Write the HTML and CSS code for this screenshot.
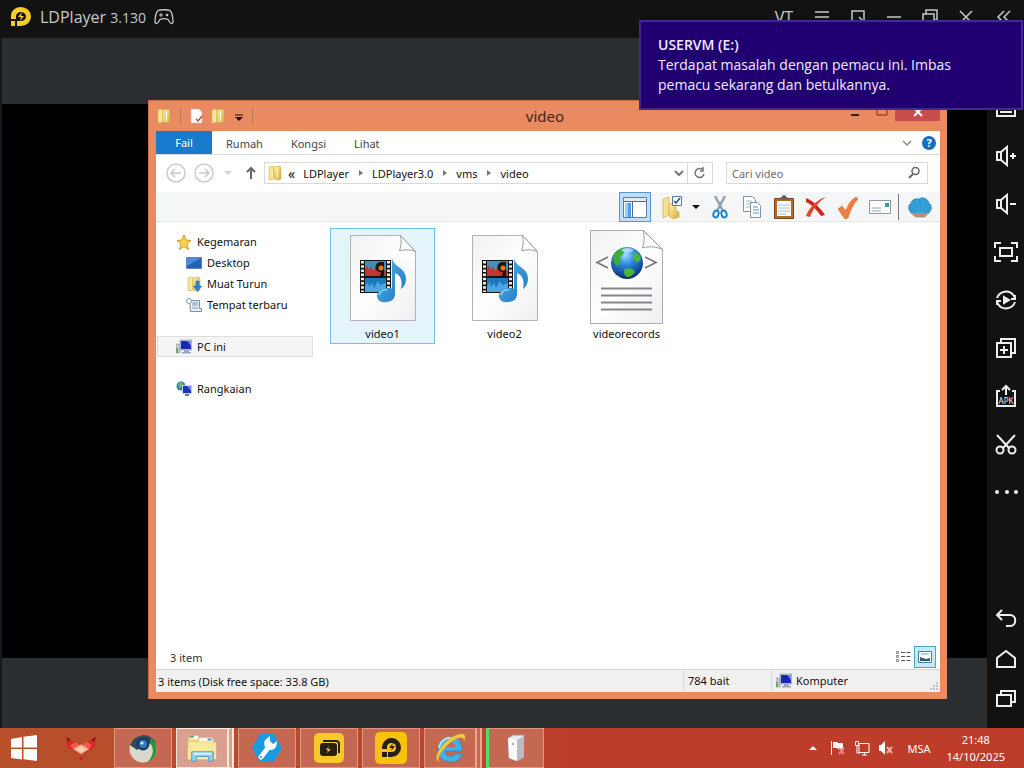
FILE: index.html
```html
<!DOCTYPE html>
<html lang="ms">
<head>
  <meta charset="UTF-8" />
  <meta name="viewport" content="width=device-width, initial-scale=1.0" />
  <title>video</title>
  <link rel="stylesheet" href="styles.css">
</head>
<body>
  <!-- shared icons -->
  <svg class="sprite" aria-hidden="true">
    <defs>
      <linearGradient id="gold" x1="0" x2="1" y1="0" y2="1">
        <stop offset="0" stop-color="#fdf3b0"/><stop offset="1" stop-color="#d9ae3c"/>
      </linearGradient>
      <linearGradient id="paper" x1="0" x2="1" y1="0" y2="1">
        <stop offset="0" stop-color="#f1f1f2"/><stop offset="0.5" stop-color="#fff"/><stop offset="1" stop-color="#eeeef0"/>
      </linearGradient>
      <linearGradient id="note" x1="0" x2="1" y1="0" y2="1">
        <stop offset="0" stop-color="#5fb2e8"/><stop offset="1" stop-color="#1578c4"/>
      </linearGradient>
      <radialGradient id="ball" cx="0.45" cy="0.25" r="0.8">
        <stop offset="0" stop-color="#9fdcff"/><stop offset="0.4" stop-color="#2b84dd"/><stop offset="1" stop-color="#06246f"/>
      </radialGradient>
    </defs>
    <symbol id="folder" viewBox="0 0 16 16">
      <path d="M2 2l4-1 1 1v12l-5 1z" fill="#f6e79a" stroke="#d5b650" stroke-width=".6"/>
      <path d="M7 2l6-1 1 3v10l-3 1-4-1z" fill="url(#gold)" stroke="#cfa83f" stroke-width=".6"/>
      <path d="M10 4h1v9h-1z" fill="#fffbe0"/>
    </symbol>
    <symbol id="computer" viewBox="0 0 16 16">
      <path d="M0 5h4v9H0z" fill="#c6cbd2" stroke="#8c95a0" stroke-width=".6"/>
      <path d="M0 9h2v5H0z" fill="#75a75c"/>
      <path d="M4 1h12v10H4z" fill="#c9d2ea" stroke="#7a87a8" stroke-width=".6"/>
      <path d="M5 2h10v8H5z" fill="#1628b4"/>
      <path d="M11 2h4v5z" fill="#7186ee"/>
      <path d="M8 11h5v2h2v1.500H6V13h2z" fill="#9aa5bb"/>
    </symbol>
    <symbol id="media-file" viewBox="0 0 68 88">
      <path d="M1.500 1.500h50l15 16v69h-65z" fill="url(#paper)" stroke="#b2b2b5"/>
      <path d="M51.500 1.500c1 6 1 10-1 15 6-1 11-1 16 1z" fill="#fff" stroke="#9c9c9f"/>
      <path d="M11 26h31v33H11z" fill="#141414"/>
      <path d="M13.500 27v31M39.500 27v31" stroke="#f3ead7" stroke-width="3" stroke-dasharray="2.500 1.700"/>
      <path d="M16 27h21v15H16z" fill="#3f8fc0"/>
      <path d="M16 42v-7l2-4 2 5 2-4 2 5 3-5 2 4 3-2 5 3v5z" fill="#c3352d"/>
      <path d="M31 28a4 4 0 1 0 1 10l-1 4h4V28z" fill="#20150e"/>
      <circle cx="32" cy="34" r="2.500" fill="#e07c1e"/>
      <path d="M16 44h21v14H16z" fill="#1f78bd"/>
      <path d="M16 52l3-4 1 5 3-4 2 5 4-7 2 4 6-2v9H16z" fill="#4aa5e0"/>
      <path d="M43 24c2 10 14 9 14 21 0 4-2 8-5 10 2-9-1-14-6-16v21c0 5-4 8-9 8-5 1-9-2-9-6s4-8 10-8c3 0 5 0 5 1z" fill="url(#note)"/>
      <path d="M30 61c1-4 5-6 8-5" fill="none" stroke="#8fcff5" stroke-width="1.500"/>
    </symbol>
    <symbol id="xml-file" viewBox="0 0 76 96">
      <path d="M1.500 1.500h53l19 19v74h-72z" fill="url(#paper)" stroke="#adadb0"/>
      <path d="M54.500 1.500c1 7 1 12-1 17 8-1 14-1 20 2z" fill="#fff" stroke="#9c9c9f"/>
      <path d="M19 28L8 33.500 19 39M56 28l11 5.500L56 39" fill="none" stroke="#77777f" stroke-width="1.700"/>
      <circle cx="38" cy="34" r="16" fill="url(#ball)"/>
      <path d="M25 25c4-4 7-6 10-6 1 4-1 7-4 9 2 4-1 7-3 9-3-2-5-7-3-12z" fill="#3cae35"/>
      <path d="M46 23c3 1 5 3 6 7l-4 4-4-5zM36 40c5-2 9 0 10 3-2 3-5 5-8 5-3-2-4-5-2-8z" fill="#49b53a"/>
      <path d="M32 21c5-3 10-2 13 0-4 3-9 4-13 0z" fill="#d7f5ff" opacity=".6"/>
      <path d="M12 59.500h51M12 66.500h51M12 73.500h51M12 80.500h51" stroke="#85858f" stroke-width="2"/>
    </symbol>
  </svg>

  <main class="player">
    <header class="player-header">
      <svg class="ld-logo" viewBox="0 0 22 22">
        <path d="M1 9A10 8.500 0 0 1 11 1a10 9.500 0 0 1 0 19H7v-5h4a5 4.500 0 1 0-5-5v3H1z" fill="#f6cd22"/>
        <path d="M1 15h4v5H1z" fill="#f6cd22"/>
        <path d="M12 6l-4 5h3l-1 4 4-5h-3z" fill="#f6cd22"/>
      </svg>
      <span class="player-name">LDPlayer <small>3.130</small></span>
      <svg class="gamepad" viewBox="0 0 22 18">
        <path d="M5 2.500c2-1 10-1 12 0 2 2 3 8 3 12-1 2-3 1-5-3-2-1-6-1-8 0-2 4-4 5-5 3 0-4 1-10 3-12z" fill="none" stroke="#c8c8c8" stroke-width="1.300"/>
        <path d="M8 5v4M6 7h4" stroke="#c8c8c8"/><circle cx="14" cy="7" r="1.300" fill="#c8c8c8"/>
      </svg>
      <div class="player-controls">
        <button>VT</button>
        <button aria-label="Menu"><svg viewBox="0 0 16 16"><path d="M1 3h14M1 8h14M1 13h14"/></svg></button>
        <button aria-label="Pin"><svg viewBox="0 0 16 16"><path d="M8 13H2V2h12v11l-5-5"/></svg></button>
        <button aria-label="Minimize"><svg viewBox="0 0 16 16"><path d="M1 8h14"/></svg></button>
        <button aria-label="Maximize"><svg viewBox="0 0 16 16"><path d="M1 5h11v9H1zM4 5V1h11v10h-3"/></svg></button>
        <button aria-label="Close"><svg viewBox="0 0 16 16"><path d="M2 2l12 12M14 2L2 14"/></svg></button>
        <button aria-label="Collapse"><svg viewBox="0 0 16 16"><path d="M8 2L2 8l6 6M14 2L8 8l6 6"/></svg></button>
      </div>
    </header>

    <div class="player-body">
      <div class="stage"><div class="screen"></div></div>
      <nav class="player-tools">
        <button aria-label="Keyboard"><svg viewBox="0 0 24 24"><path d="M3 5h18v15H3z"/><path d="M6 16h12"/></svg></button>
        <button aria-label="Volume up"><svg viewBox="0 0 24 24"><path d="M3 8h4l6-5v18l-6-5H3zM7 8v8"/><path d="M16 12h6M19 9v6"/></svg></button>
        <button aria-label="Volume down"><svg viewBox="0 0 24 24"><path d="M3 8h4l6-5v18l-6-5H3zM7 8v8"/><path d="M16 12h6"/></svg></button>
        <button aria-label="Full screen"><svg viewBox="0 0 24 24"><path d="M1 8V3h6M17 3h6v5M23 16v5h-6M7 21H1v-5M6 8h12v8H6z"/></svg></button>
        <button aria-label="Sync"><svg viewBox="0 0 24 24"><path d="M3 10a9.500 9.500 0 0 1 17-2l1 3M21 14a9.500 9.500 0 0 1-17 2l-1-3M3 17v-4h4M21 7v4h-4"/><path d="M10 9l5 3-5 3z" class="solid"/></svg></button>
        <button aria-label="New window"><svg viewBox="0 0 24 24"><path d="M3 7h14v14H3zM7 7V3h14v14h-4M10 10v8M6 14h8"/></svg></button>
        <button aria-label="Install APK"><svg viewBox="0 0 24 24"><path d="M6 7H3v15h18V7h-3M12 11V2M8 6l4-4 4 4"/><text x="12" y="20">APK</text></svg></button>
        <button aria-label="Cut"><svg viewBox="0 0 24 24"><path d="M3 3l12 13M21 3L9 16"/><circle cx="6" cy="18" r="3.500"/><circle cx="18" cy="18" r="3.500"/></svg></button>
        <button aria-label="More"><svg viewBox="0 0 24 24"><g class="solid"><circle cx="3" cy="12" r="1"/><circle cx="13" cy="12" r="1"/><circle cx="22" cy="12" r="1"/></g></svg></button>
        <div class="android-keys">
          <button aria-label="Back"><svg viewBox="0 0 24 24"><path d="M8 3L3 8l5 5M3 8h13c7 0 7 11 0 11h-4"/></svg></button>
          <button aria-label="Home"><svg viewBox="0 0 24 24"><path d="M3 20v-9l9-7 9 7v9z"/></svg></button>
          <button aria-label="Recent"><svg viewBox="0 0 24 24"><path d="M3 8h14v11H3zM7 8V4h14v11h-4"/></svg></button>
        </div>
      </nav>
    </div>
  </main>

  <section class="explorer">
    <div class="title-bar">
      <div class="quick-access">
        <svg viewBox="0 0 16 16"><use href="#folder"/></svg>
        <i></i>
        <button aria-label="Properties"><svg viewBox="0 0 16 16"><path d="M2 1h8l3 3v11H2z" fill="#fff" stroke="#c7b5ac" stroke-width=".7"/><path d="M7 11l2 2 4-5" fill="none" stroke="#c74b33" stroke-width="1.500"/></svg></button>
        <button aria-label="New folder"><svg viewBox="0 0 16 16"><use href="#folder"/></svg></button>
        <button aria-label="Customize"><svg viewBox="0 0 16 16"><path d="M4 7h8" stroke="#111"/><path d="M4 9h8l-4 4z" fill="#111"/></svg></button>
        <i></i>
      </div>
      <h1>video</h1>
      <div class="window-controls">
        <button aria-label="Minimize"><svg viewBox="0 0 12 12"><path d="M2 10h8" stroke="#3b1c10" stroke-width="2"/></svg></button>
        <button aria-label="Maximize"><svg viewBox="0 0 12 12"><path d="M1 1h10v9H1z" fill="none" stroke="#7a2b12"/></svg></button>
        <button class="close" aria-label="Close"><svg viewBox="0 0 12 12"><path d="M2 3l8 8M10 3l-8 8" stroke="#fff" stroke-width="2"/></svg></button>
      </div>
    </div>

    <div class="window-content">
      <div class="tabs">
        <button class="file-tab">Fail</button>
        <button>Rumah</button>
        <button>Kongsi</button>
        <button>Lihat</button>
        <div class="tabs-end">
          <svg viewBox="0 0 14 14"><path d="M3 5l4 4 4-4" fill="none" stroke="#888" stroke-width="1.500"/></svg>
          <button class="help">?</button>
        </div>
      </div>

      <div class="address-row">
        <button class="round" aria-label="Back"><svg viewBox="0 0 20 20"><circle cx="10" cy="10" r="9"/><path d="M15 10H5M9 6l-4 4 4 4"/></svg></button>
        <button class="round" aria-label="Forward"><svg viewBox="0 0 20 20"><circle cx="10" cy="10" r="9"/><path d="M5 10h10M11 6l4 4-4 4"/></svg></button>
        <button class="history" aria-label="Recent locations"><svg viewBox="0 0 8 8"><path d="M0 2h8L4 6z" fill="#d0d0d0"/></svg></button>
        <button class="up" aria-label="Up"><svg viewBox="0 0 14 14"><path d="M7 13V2M3 6l4-4 4 4" fill="none" stroke="#666" stroke-width="2"/></svg></button>
        <div class="address">
          <svg class="small-icon" viewBox="0 0 16 16"><use href="#folder"/></svg>
          <span class="dots">«</span>
          <button>LDPlayer</button><span class="arrow"></span>
          <button>LDPlayer3.0</button><span class="arrow"></span>
          <button>vms</button><span class="arrow"></span>
          <button>video</button>
          <button class="drop" aria-label="Previous locations"><svg viewBox="0 0 12 12"><path d="M2 4l4 4 4-4" fill="none" stroke="#777" stroke-width="2"/></svg></button>
          <button class="refresh" aria-label="Refresh"><svg viewBox="0 0 14 14"><path d="M10 4a4.500 4.500 0 1 0 1 4M10 1v4H7" fill="none" stroke="#777" stroke-width="1.500"/></svg></button>
        </div>
        <div class="search">
          <input type="text" placeholder="Cari video" aria-label="Cari video">
          <svg viewBox="0 0 14 14"><circle cx="8.500" cy="5" r="3.500" fill="none" stroke="#666" stroke-width="1.500"/><path d="M6 8l-4 4" stroke="#666" stroke-width="2"/></svg>
        </div>
      </div>

      <div class="commands">
        <button class="active" aria-label="Navigation pane"><svg viewBox="0 0 24 24"><path d="M.500 2.500h23v20H.500z" fill="#fff" stroke="#5d7ea5"/><path d="M1 3h22v3H1z" fill="#dfeaf6"/><path d="M2 8h6v14H2z" fill="#4b9de6"/><path d="M2 8h3v14H2z" fill="#9dccf5"/><path d="M1 6.500h22M9.500 7v15" stroke="#4b6a92"/></svg></button>
        <button class="organize" aria-label="Organize"><svg viewBox="0 0 24 24"><path d="M3 4l6-2v18l-6 3z" fill="#f5e28e" stroke="#cfae4a" stroke-width=".7"/><path d="M9 9l7-1v8l3 1v5l-6 2-4-3z" fill="url(#gold)" stroke="#cfa83f" stroke-width=".7"/><path d="M12.500 1.500h9v9h-9z" fill="#f4f9ff" stroke="#5d7b9f"/><path d="M14 6l2 2 4-5" fill="none" stroke="#234c83" stroke-width="1.500"/></svg></button>
        <button class="organize-drop" aria-label="Organize options"><svg viewBox="0 0 8 8"><path d="M0 2h8L4 6z" fill="#111"/></svg></button>
        <button aria-label="Cut"><svg viewBox="0 0 24 24"><path d="M7 1l8 15M17 1L9 16" stroke="#8ba2b5" stroke-width="2.500"/><ellipse cx="8" cy="19" rx="2.500" ry="3.500" transform="rotate(20 8 19)" fill="none" stroke="#1e83ce" stroke-width="2"/><ellipse cx="16" cy="19" rx="2.500" ry="3.500" transform="rotate(-20 16 19)" fill="none" stroke="#1e83ce" stroke-width="2"/></svg></button>
        <button aria-label="Copy"><svg viewBox="0 0 24 24"><path d="M3.500 1.500h9l3 3v12h-12z" fill="#fff" stroke="#8492a3"/><path d="M6 6h6M6 9h6M6 12h4" stroke="#9fb4cb"/><path d="M10.500 7.500h7l3 3v12h-10z" fill="#fff" stroke="#8492a3"/><path d="M13 12h5M13 15h6M13 18h6" stroke="#4e9bd9"/></svg></button>
        <button aria-label="Paste"><svg viewBox="0 0 24 24"><path d="M2.500 3.500h19v20h-19z" fill="#b06a2a" stroke="#7b4418"/><path d="M5 6h14v15H5z" fill="#fbfbf6"/><path d="M6 10h12M6 13h12M6 16h12M6 19h8" stroke="#a9c0da"/><path d="M7 5l2-3h1a2 2 0 0 1 4 0h1l2 3z" fill="#5f6368"/></svg></button>
        <button aria-label="Delete"><svg viewBox="0 0 24 24"><path d="M2 3c7 3 14 9 19 17l-4 1C12 14 7 9 2 7z" fill="#cf2419"/><path d="M22 2C14 7 9 14 6 22l-4-1C5 13 12 5 22 2z" fill="#e5442f"/></svg></button>
        <button aria-label="Select"><svg viewBox="0 0 24 24"><path d="M2 14l4-3 4 5C12 9 16 4 20 2l2 2c-5 5-8 12-10 19l-3 1z" fill="#ee7d3e" stroke="#d26127" stroke-width=".5"/></svg></button>
        <button aria-label="Email"><svg viewBox="0 0 24 24"><path d="M1.500 5.500h21v13h-21z" fill="#fff" stroke="#8d9aa8"/><path d="M4 13h9M4 16h9" stroke="#8da3b8"/><path d="M17 8h4v4h-4z" fill="#3d9992"/></svg></button>
        <span class="divider"></span>
        <button aria-label="Shell"><svg viewBox="0 0 24 24"><path d="M6 20C0 17-1 11 3 8c1-4 5-5 8-4 4-3 9 0 10 4 4 3 3 9-3 12l-1 2H8z" fill="#2d9bd5" stroke="#4c91a3" stroke-width=".7"/><path d="M12 20L4 9M12 20L9 5M12 20l4-15M12 20l9-10" stroke="#58b5df" stroke-width=".6"/><path d="M2 17l5 1h10l4-1-4 5H7z" fill="#b58f70"/></svg></button>
      </div>

      <div class="panes">
        <nav class="tree">
          <a href="#"><svg viewBox="0 0 16 16"><path d="M8 1l2 5 5 .5-4 3.500 1.500 5.500L8 12.500 3.500 15.500 5 10 1 6.500 6 6z" fill="#ffd250" stroke="#dc9528"/></svg>Kegemaran</a>
          <a class="sub" href="#"><svg viewBox="0 0 16 16"><path d="M.500 2.500h15v11H.500z" fill="#2461b8" stroke="#5f83b5"/><path d="M1 3h14L1 11z" fill="#4f8ad8"/></svg>Desktop</a>
          <a class="sub" href="#"><svg viewBox="0 0 16 16"><use href="#folder"/><path d="M10 5h3v5h2.500l-4 5.500L7.500 10H10z" fill="#2f86d6" stroke="#1b5f9f" stroke-width=".6"/></svg>Muat Turun</a>
          <a class="sub" href="#"><svg viewBox="0 0 16 16"><path d="M3.500 3.500h10v8h2v3h-11z" fill="#e8eef5" stroke="#7d8ea1"/><path d="M6 6h6M6 8h6M6 11h6" stroke="#8096ad"/><circle cx="3" cy="4" r="2.500" fill="#fff" stroke="#8899a9"/></svg>Tempat terbaru</a>
          <a class="group selected" href="#"><svg viewBox="0 0 16 16"><use href="#computer"/></svg>PC ini</a>
          <a class="group" href="#"><svg viewBox="0 0 16 16"><circle cx="5" cy="5" r="4.500" fill="#2b83a8"/><path d="M2 3l3-2 2 2-3 5z" fill="#6bc06e"/><path d="M6 4h10v9H6z" fill="#c9d2ea"/><path d="M7 5h8v7H7z" fill="#1b35bd"/><path d="M11 5h4v5z" fill="#6c87ee"/><path d="M9 13h4v2H9z" fill="#6f7d91"/></svg>Rangkaian</a>
        </nav>
        <div class="files">
          <button class="file selected"><svg class="media" viewBox="0 0 68 88"><use href="#media-file"/></svg><span>video1</span></button>
          <button class="file"><svg class="media" viewBox="0 0 68 88"><use href="#media-file"/></svg><span>video2</span></button>
          <button class="file"><svg class="xml" viewBox="0 0 76 96"><use href="#xml-file"/></svg><span>videorecords</span></button>
        </div>
      </div>

      <div class="details">
        <span>3 item</span>
        <div class="views">
          <button aria-label="Details view"><svg viewBox="0 0 16 14"><path d="M1.500 1.500h2v2h-2zM1.500 5.500h2v2h-2zM1.500 9.500h2v2h-2z" fill="none" stroke="#888"/><path d="M6 2.500h4M11.500 2.500h4M6 6.500h4M11.500 6.500h4M6 10.500h4M11.500 10.500h4" stroke="#555"/></svg></button>
          <button class="active" aria-label="Icon view"><svg viewBox="0 0 16 14"><path d="M1.500 1.500h13v11h-13z" fill="#fff" stroke="#48829e"/><path d="M3 7l3 1 3 1 4-1v3H3z" fill="#315d70"/><path d="M4 4h8" stroke="#6caac5"/></svg></button>
        </div>
      </div>

      <footer class="status-bar">
        <span class="status-main">3 items (Disk free space: 33.8 GB)</span>
        <span class="status-size">784 bait</span>
        <span class="status-place"><svg class="small-icon" viewBox="0 0 16 16"><use href="#computer"/></svg>Komputer</span>
        <svg class="grip" viewBox="0 0 12 12"><path d="M8 2h2v2H8zM8 5h2v2H8zM8 8h2v2H8zM5 5h2v2H5zM5 8h2v2H5zM2 8h2v2H2z" fill="#c0c0c0"/></svg>
      </footer>
    </div>
  </section>

  <aside class="toast">
    <strong>USERVM (E:)</strong>
    <p>Terdapat masalah dengan pemacu ini. Imbas pemacu sekarang dan betulkannya.</p>
  </aside>

  <footer class="taskbar">
    <button class="start" aria-label="Start"><svg viewBox="0 0 28 28"><path d="M1 5l11-2v10.500H1zM13.500 2.800L27 1v12.500H13.500zM1 15h11v10.500L1 24zM13.500 15H27v12l-13.500-1.800z" fill="#fff"/></svg></button>
    <button class="pinned" aria-label="Red app"><svg viewBox="0 0 34 28"><path d="M2 4l9 3 6 5 6-5 9-3v9l-15 9-15-9z" fill="#d8272a"/><path d="M1 2l5 3-3 3zM33 2l-5 3 3 3z" fill="#7c1a18"/><path d="M11 7l6 5 6-5 6 5-12 8-12-8z" fill="#ef5a48"/><path d="M17 10l9 5-9 6-9-6z" fill="#f7a184"/><path d="M17 12l6 3-6 4-6-4z" fill="#fbd0b5"/><path d="M14 24h6l-3 3z" fill="#c7201f"/></svg></button>
    <button class="task" aria-label="Browser"><svg viewBox="0 0 32 32"><circle cx="16" cy="17" r="13.500" fill="#d9d8cb"/><path d="M3 13A14 14 0 0 1 29 11l-12 1-7 6z" fill="#304956"/><path d="M24 6a14 14 0 0 1-3 24c5-7 7-12 2-19z" fill="#25973b"/><circle cx="16" cy="12" r="6.500" fill="#15396d"/><circle cx="16" cy="12" r="4" fill="#377dbc"/><circle cx="15" cy="11" r="1.500" fill="#d5edfa"/></svg></button>
    <button class="task stacked current" aria-label="File Explorer"><svg viewBox="0 0 34 32"><path d="M2 5h8l2 2h18v21H2z" fill="#ecd27a"/><path d="M5 3h8v4H5zM14 5h14v4H14z" fill="#fafbe9"/><path d="M5 4h3" stroke="#3f9c43" stroke-width="2"/><path d="M23 7h4" stroke="#4292cd" stroke-width="2"/><path d="M2 10h30v18H2z" fill="#f8e9a0"/><path d="M6 30V20h23v10h-5v-5H11v5z" fill="#8fd0ea" stroke="#4d9fc7"/><path d="M8 22h19" stroke="#e4f8ff" stroke-width="2"/></svg></button>
    <button class="task" aria-label="Repair tool"><svg viewBox="0 0 32 32"><path d="M9 2h14l8 14-8 14H9L1 16z" fill="#199be0"/><path d="M17 16l-7 9" stroke="#fff" stroke-width="5" stroke-linecap="round"/><path d="M14 8l5-4v5l3 3 4-3c0 7-3 9-7 9-5 0-7-6-5-10z" fill="#fff"/><circle cx="10" cy="25" r="1" fill="#199be0"/></svg></button>
    <button class="task" aria-label="LDMultiPlayer"><svg viewBox="0 0 32 32"><rect x="1" y="1" width="30" height="30" rx="5" fill="#f8c82d"/><path d="M10 9h13c2 0 3 1 3 3v9" fill="none" stroke="#27210f" stroke-width="2"/><rect x="7" y="11" width="17" height="13" rx="3" fill="#27210f"/><path d="M16 14l-3 4h2l-1 3 4-4h-3z" fill="#f8c82d"/></svg></button>
    <button class="task" aria-label="LDPlayer"><svg viewBox="0 0 32 32"><rect width="32" height="32" rx="5" fill="#f8c20f"/><path d="M7 17v-2a9.500 9.500 0 1 1 9.500 10H13v-5h3.500a4.500 4.500 0 1 0-4.500-5v2z" fill="#252014"/><path d="M7 20h5v5H7z" fill="#252014"/><path d="M18 11l-4 5h3l-1 3 4-5h-3z" fill="#252014"/></svg></button>
    <button class="task stacked" aria-label="Internet Explorer"><svg viewBox="0 0 32 32"><path d="M28 19H11c0 6 8 7 10 3h7c-2 6-6 8-11 8C9 30 4 25 4 18 4 10 10 5 17 5c7 0 12 6 11 14z" fill="#45b0e6" stroke="#207fb8" stroke-width=".6"/><path d="M11 15c1-6 10-6 11 0z" fill="#c56852"/><path d="M5 16C6 9 12 5 18 6" fill="none" stroke="#b5e8fb" stroke-width="2"/><path d="M5 30C-4 26 13 3 27 2c5-1 5 4 3 7 0-3-2-4-5-3C16 8 2 23 5 30z" fill="#f5c941" stroke="#d39a20" stroke-width=".5"/></svg></button>
    <button class="task progress" aria-label="Storage"><svg viewBox="0 0 32 32"><path d="M8 6l5-3h11l-1 23-6 3-8-3z" fill="#e9eaec" stroke="#999"/><path d="M8 6l9 2v21l-8-3z" fill="#fafafa"/><path d="M17 8l7-4v21l-7 4z" fill="#b9bdc3"/><circle cx="13" cy="12" r="1" fill="#898f97"/></svg></button>
    <div class="tray">
      <svg class="tray-up" viewBox="0 0 8 8"><path d="M0 6h8L4 2z" fill="#fff"/></svg>
      <svg viewBox="0 0 16 16"><path d="M1.500 1v14" stroke="#fff"/><path d="M3 2h4l1 1h5v6H8L7 8H3z" fill="#fff"/><path d="M9 8l5 6M14 8l-5 6" stroke="#f2808c" stroke-width="2"/></svg>
      <svg viewBox="0 0 16 16"><path d="M5 3.500h10v9H5zM8 15h5M10.500 12v3" fill="none" stroke="#fff"/><path d="M1.500 1.500h3v4h-3zM3 6v7h3" fill="none" stroke="#fff"/></svg>
      <svg viewBox="0 0 16 16"><path d="M1 5h2l4-4v14l-4-4H1z" fill="#fff"/><path d="M9 7l5 6M14 7l-5 6" stroke="#f4b0a8" stroke-width="2"/></svg>
      <span class="language">MSA</span>
      <time class="clock"><span>21:48</span><span>14/10/2025</span></time>
    </div>
  </footer>
</body>
</html>
```
FILE: styles.css
```css
:root {
  --frame: #e98a61;
  --blue: #1979ca;
  --dark: #121212;
  --slate: #2a2e31;
}
* {
  box-sizing: border-box;
}
body {
  margin: 0;
  height: 100vh;
  display: flex;
  flex-direction: column;
  position: relative;
  overflow: hidden;
  font-family: "Noto Sans", "Open Sans", sans-serif;
  font-size: 11px;
  color: #111;
  background: #000;
}
button {
  padding: 0;
  border: none;
  background: none;
  font: inherit;
  color: inherit;
  display: flex;
  align-items: center;
  justify-content: center;
}
svg {
  display: block;
  flex-shrink: 0;
}
.sprite {
  position: absolute;
  width: 0;
  height: 0;
}

/* LDPlayer */
.player {
  flex: 1;
  min-height: 0;
  display: flex;
  flex-direction: column;
}
.player-header {
  height: 38px;
  padding: 0 0 4px 10px;
  display: flex;
  align-items: center;
  background: var(--dark);
  color: #c8c8c8;
}
.ld-logo {
  width: 22px;
  height: 22px;
}
.player-name {
  margin: 0 7px 0 8px;
  font-family: "Open Sans", sans-serif;
  font-size: 16px;
}
.player-name small {
  font-size: 14px;
}
.gamepad {
  width: 22px;
  height: 18px;
}
.player-controls {
  margin-left: auto;
  display: flex;
}
.player-controls button {
  width: 36px;
  height: 32px;
  font-size: 16px;
}
.player-controls button:first-child,
.player-controls button:last-child {
  width: 40px;
}
.player-controls svg {
  width: 16px;
  height: 16px;
  fill: none;
  stroke: #c8c8c8;
  stroke-width: 1.5;
}
.player-body {
  flex: 1;
  min-height: 0;
  display: flex;
}
.stage {
  flex: 1;
  padding: 66px 0 70px;
  background: var(--slate);
  border-left: 2px solid #15191b;
  display: flex;
}
.screen {
  flex: 1;
  background: #000;
}
.player-tools {
  width: 37px;
  padding: 46px 0 9px;
  background: var(--dark);
  display: flex;
  flex-direction: column;
}
.player-tools button {
  width: 100%;
  height: 48px;
}
.player-tools svg {
  width: 24px;
  height: 24px;
  fill: none;
  stroke: #eee;
  stroke-width: 2;
}
.player-tools .solid {
  fill: #eee;
}
.player-tools text {
  font-size: 8px;
  text-anchor: middle;
  fill: #eee;
  stroke: none;
}
.android-keys {
  margin-top: auto;
}
.android-keys button {
  height: 40px;
}

/* Explorer window */
.explorer {
  position: absolute;
  top: 100px;
  right: 77px;
  bottom: 69px;
  left: 148px;
  padding: 0 7px 7px;
  border: 1px solid #c66f49;
  border-width: 1px 0 0 1px;
  background: var(--frame);
  display: flex;
  flex-direction: column;
}
.title-bar {
  height: 30px;
  padding-right: 6px;
  display: grid;
  grid-template-columns: 1fr auto 1fr;
  align-items: center;
}
.quick-access {
  display: flex;
  align-items: center;
  gap: 5px;
}
.quick-access svg {
  width: 16px;
  height: 16px;
}
.quick-access i {
  width: 1px;
  height: 16px;
  margin: 0 3px;
  background: #bd7555;
}
.quick-access i:last-child {
  margin: 0;
}
.title-bar h1 {
  margin: 0;
  font-size: 15px;
  font-weight: normal;
  color: #43271b;
}
.window-controls {
  align-self: start;
  justify-self: end;
  margin-right: -6px;
  display: flex;
}
.window-controls button {
  width: 27px;
  height: 20px;
}
.window-controls .close {
  width: 45px;
  background: #c84e4b;
}
.window-controls svg {
  width: 12px;
  height: 12px;
}
.window-content {
  flex: 1;
  min-height: 0;
  background: #fff;
  display: flex;
  flex-direction: column;
}
.tabs {
  height: 24px;
  display: flex;
  border-bottom: 1px solid #dadbdc;
  color: #444;
}
.tabs > button {
  padding: 2px 14px 0;
}
.tabs > .file-tab {
  width: 56px;
  padding: 0;
  background: var(--blue);
  color: #fff;
}
.tabs-end {
  margin-left: auto;
  padding-right: 4px;
  display: flex;
  align-items: center;
  gap: 8px;
}
.tabs-end svg {
  width: 14px;
  height: 14px;
}
.help {
  width: 14px;
  height: 14px;
  border-radius: 50%;
  background: #146fc2;
  color: #fff;
  font-weight: bold;
}
.address-row {
  height: 36px;
  margin-bottom: 1px;
  padding: 0 12px 0 10px;
  display: flex;
  align-items: center;
}
.round {
  margin-right: 8px;
}
.round svg {
  width: 20px;
  height: 20px;
  fill: none;
  stroke: #cbcbcb;
  stroke-width: 1.5;
}
.history {
  margin-left: 2px;
}
.history svg {
  width: 8px;
  height: 8px;
}
.up {
  margin: 0 6px 0 12px;
}
.up svg {
  width: 14px;
  height: 14px;
}
.address {
  flex: 1;
  height: 22px;
  padding-left: 2px;
  border: 1px solid #d9d9d9;
  display: flex;
  align-items: center;
}
.small-icon {
  width: 16px;
  height: 16px;
}
.dots {
  margin: 0 8px 0 5px;
  font-size: 14px;
}
.arrow {
  margin: 0 9px 0 10px;
  border: 3px solid transparent;
  border-left: 4px solid #777;
  border-right: none;
}
.address .drop {
  width: 16px;
  height: 20px;
  margin-left: auto;
}
.drop svg {
  width: 12px;
  height: 12px;
}
.address .refresh {
  width: 25px;
  height: 20px;
  border-left: 1px solid #d9d9d9;
}
.refresh svg {
  width: 14px;
  height: 14px;
}
.search {
  width: 202px;
  height: 22px;
  margin-left: 13px;
  padding: 0 6px 0 5px;
  border: 1px solid #d9d9d9;
  display: flex;
  align-items: center;
}
.search input {
  flex: 1;
  min-width: 0;
  padding: 0;
  border: none;
  outline: none;
  font: inherit;
}
.search input::placeholder {
  color: #6d6d6d;
}
.search svg {
  width: 14px;
  height: 14px;
}
.commands {
  height: 30px;
  padding-right: 4px;
  display: flex;
  align-items: center;
  justify-content: flex-end;
  background: #f5f6f7;
  border-bottom: 1px solid #e6e7e8;
}
.commands button {
  width: 32px;
  height: 30px;
}
.commands svg {
  width: 24px;
  height: 24px;
}
.commands .active {
  margin-right: 5px;
  border: 1px solid #5994cc;
  background: #bfdcf8;
}
.commands .organize-drop {
  width: 16px;
}
.organize-drop svg {
  width: 8px;
  height: 8px;
}
.divider {
  width: 1px;
  height: 26px;
  margin: 0 5px 0 2px;
  background: #777;
}
.panes {
  flex: 1;
  min-height: 0;
  display: flex;
}
.tree {
  width: 157px;
  padding: 9px 0 0 1px;
  display: flex;
  flex-direction: column;
}
.tree a {
  height: 21px;
  padding-left: 18px;
  border: 1px solid transparent;
  display: flex;
  align-items: center;
  gap: 5px;
  color: #111;
  text-decoration: none;
}
.tree .sub {
  padding-left: 28px;
}
.tree .group {
  margin-top: 21px;
}
.tree .selected {
  background: #f5f5f5;
  border-color: #dedede;
}
.tree svg {
  width: 16px;
  height: 16px;
}
.files {
  flex: 1;
  padding: 6px 17px;
  display: flex;
  flex-wrap: wrap;
  align-content: flex-start;
  gap: 17px;
}
.file {
  width: 105px;
  height: 116px;
  border: 1px solid transparent;
  flex-direction: column;
  justify-content: flex-end;
}
.file.selected {
  background: #e5f3fb;
  border-color: #70c0e7;
}
.media {
  width: 68px;
  height: 88px;
}
.xml {
  width: 76px;
  height: 96px;
}
.media + span {
  margin-top: 3px;
}
.file span {
  line-height: 18px;
}
.details {
  height: 24px;
  padding: 0 4px 0 14px;
  display: flex;
  align-items: center;
  justify-content: space-between;
  color: #333;
}
.views {
  display: flex;
}
.views button {
  width: 22px;
  height: 22px;
}
.views .active {
  border: 1px solid #4ba5c8;
  background: #c6e8f7;
}
.views svg {
  width: 16px;
  height: 14px;
}
.status-bar {
  height: 23px;
  padding-left: 2px;
  display: flex;
  align-items: center;
  background: #f0f0f0;
  border-top: 1px solid #d8d8d8;
}
.status-main {
  flex: 1;
}
.status-size {
  width: 88px;
  padding-left: 4px;
  border-left: 1px solid #d8d8d8;
  line-height: 20px;
}
.status-place {
  width: 157px;
  padding-left: 4px;
  border-left: 1px solid #d8d8d8;
  display: flex;
  align-items: center;
  gap: 4px;
  line-height: 20px;
}
.grip {
  width: 12px;
  height: 12px;
  align-self: flex-end;
}

/* Notification */
.toast {
  position: absolute;
  top: 20px;
  right: 1px;
  width: 384px;
  padding: 13px 60px 13px 17px;
  border: 2px solid #402a91;
  background: #200070;
  color: #f0eaff;
  font-family: "Open Sans", sans-serif;
  font-size: 14px;
  line-height: 20px;
}
.toast strong {
  font-weight: 600;
}
.toast p {
  margin: 0;
}

/* Taskbar */
.taskbar {
  height: 40px;
  display: flex;
  gap: 4px;
  background: linear-gradient(90deg, #b7502b, #ba472d 40%, #bd3c2a 60%, #bd3c2a);
}
.taskbar button svg {
  width: 32px;
  height: 32px;
}
.taskbar .start {
  width: 48px;
}
.taskbar .start svg {
  width: 28px;
  height: 28px;
}
.pinned {
  width: 58px;
}
.task {
  width: 58px;
  border: 1px solid #df9682;
  background: #c56852;
}
.task.stacked {
  border-right: 7px double #e9a795;
}
.task.current {
  background: #d9a090;
  border-color: #ffe9df;
}
.task.progress {
  border-left: 3px solid #55df65;
}
.tray {
  margin-left: auto;
  padding-right: 19px;
  display: flex;
  align-items: center;
  gap: 8px;
  color: #fff;
}
.tray svg {
  width: 16px;
  height: 16px;
}
.tray .tray-up {
  width: 8px;
  height: 8px;
  margin-right: 5px;
}
.language {
  margin: 0 8px 0 5px;
}
.clock {
  display: flex;
  flex-direction: column;
  align-items: center;
  line-height: 17px;
}
```
